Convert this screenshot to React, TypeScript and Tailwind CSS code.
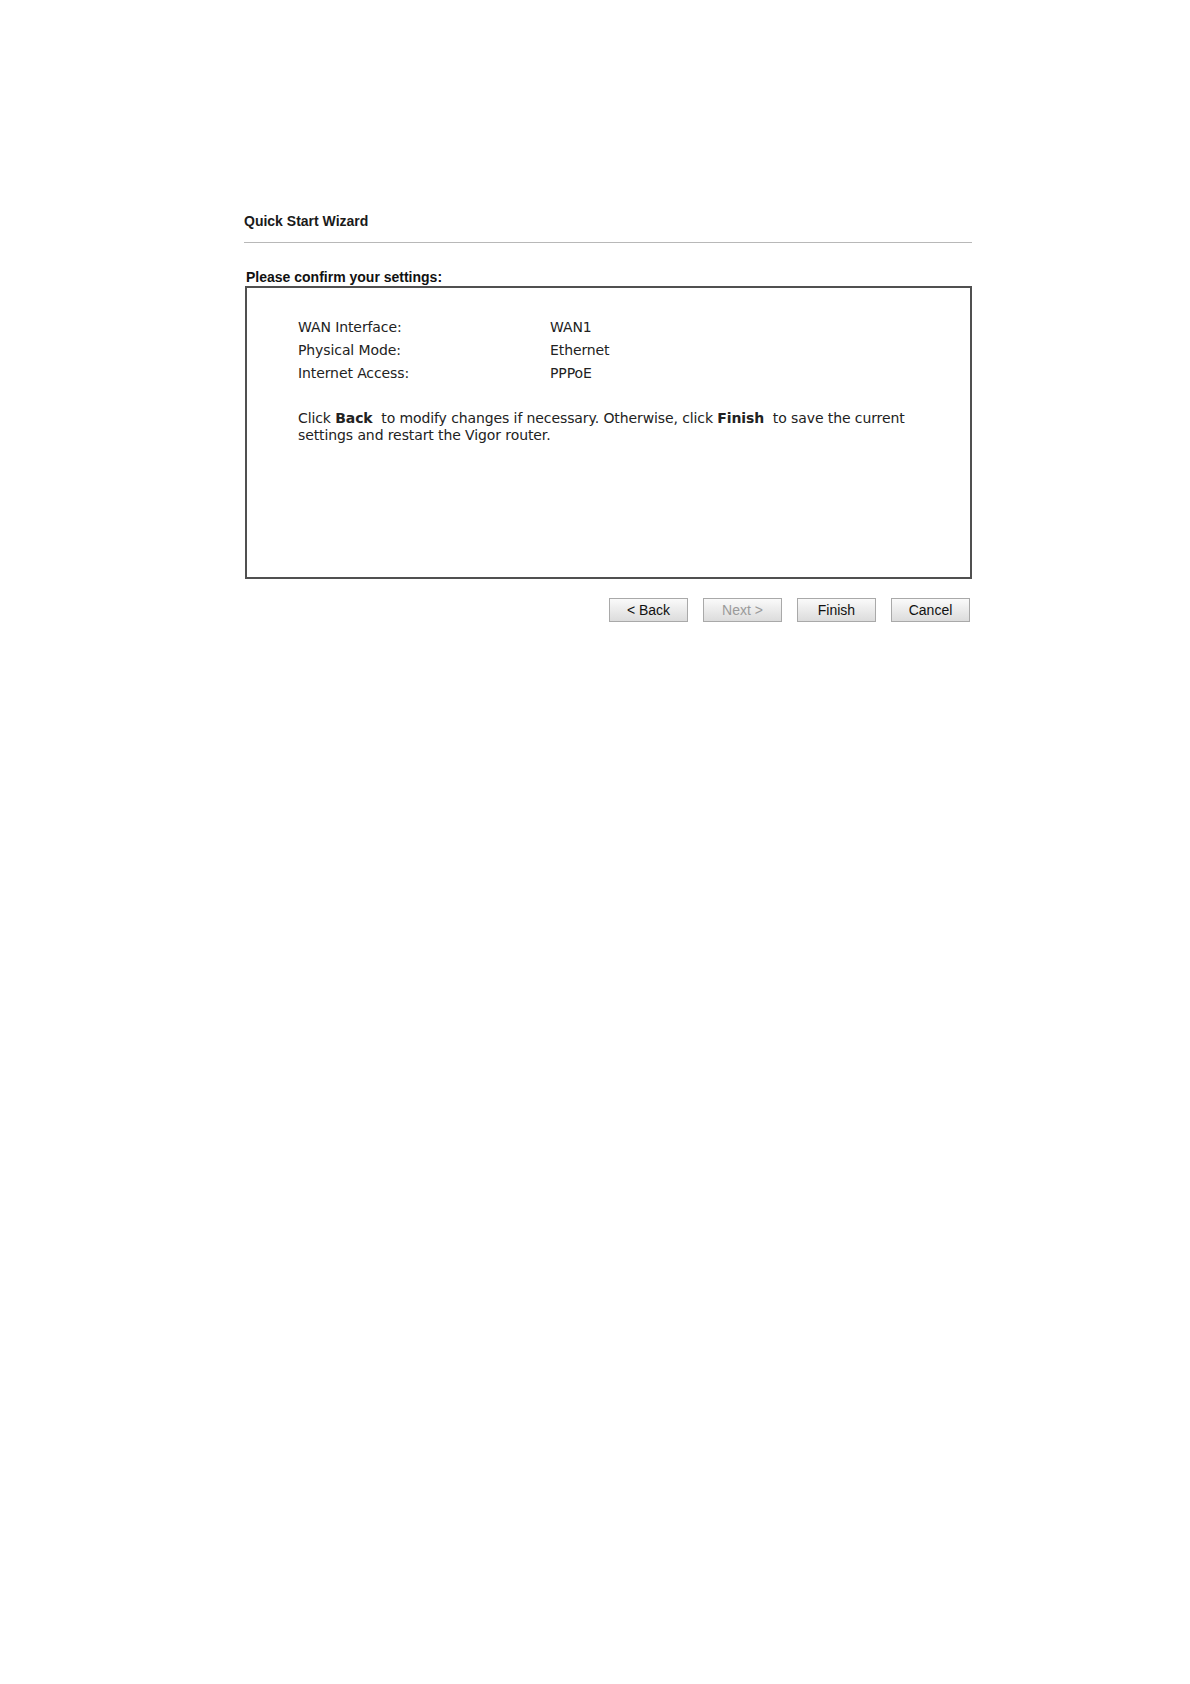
import React from "react";

const rows = [
  { label: "WAN Interface:", value: "WAN1" },
  { label: "Physical Mode:", value: "Ethernet" },
  { label: "Internet Access:", value: "PPPoE" },
];

function WizardButton({ children, disabled }: { children: React.ReactNode; disabled?: boolean }) {
  return (
    <button
      disabled={disabled}
      className={
        "flex h-[24px] w-[79px] items-center justify-center border border-[#a9a9a9] bg-linear-to-b from-[#fafafa] to-[#dcdcdc] text-[14px] leading-none " +
        (disabled ? "text-[#9a9a9a]" : "text-[#111]")
      }
      style={{ fontFamily: '"Liberation Sans", Arial, sans-serif' }}
    >
      {children}
    </button>
  );
}

export default function App() {
  return (
    <div className="min-h-[1684px] w-[1190px] bg-white pl-[244px] pt-[213px]">
      <div className="w-[728px]" style={{ fontFamily: '"Liberation Sans", Arial, sans-serif' }}>
        <div className="text-[14px] font-bold leading-[16px] text-[#1a1a1a]">Quick Start Wizard</div>
        <div className="mt-[13px] h-px bg-[#b8b8b8]" />

        <div className="ml-[2px] mt-[26px] text-[14px] font-bold leading-[16px] text-[#111]">
          Please confirm your settings:
        </div>

        <div
          className="ml-[1px] mt-[1px] h-[293px] w-[727px] border-2 border-[#505050] pl-[51px] pt-[28px] text-[14px] tracking-[-0.1px] text-[#222]"
          style={{ fontFamily: '"DejaVu Sans", Verdana, sans-serif' }}
        >
          {rows.map((r) => (
            <div key={r.label} className="flex h-[23px] items-center">
              <span className="w-[252px]">{r.label}</span>
              <span>{r.value}</span>
            </div>
          ))}
          <p className="mt-[25px] w-[640px] leading-[17px]">
            Click <b>Back</b>&nbsp; to modify changes if necessary. Otherwise, click <b>Finish</b>&nbsp; to save the
            current <br />
            settings and restart the Vigor router.
          </p>
        </div>

        <div className="mt-[19px] flex justify-end gap-[15px] pr-[2px]">
          <WizardButton>&lt; Back</WizardButton>
          <WizardButton disabled>Next &gt;</WizardButton>
          <WizardButton>Finish</WizardButton>
          <WizardButton>Cancel</WizardButton>
        </div>
      </div>
    </div>
  );
}
